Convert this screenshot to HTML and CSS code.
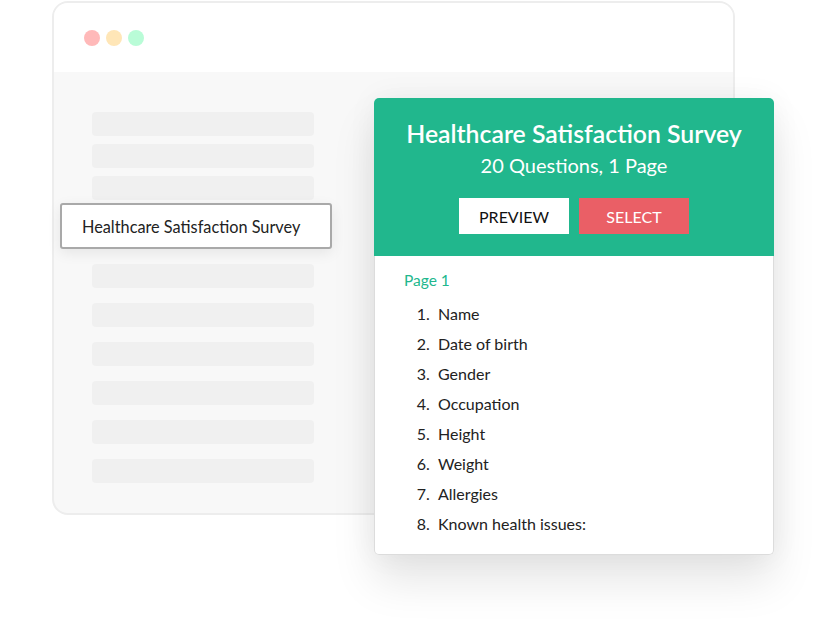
FILE: index.html
```html
<!DOCTYPE html>
<html lang="en">
<head>
    <meta charset="UTF-8">
    <meta name="viewport" content="width=device-width, initial-scale=1.0">
    <title>Survey Templates</title>
    <link rel="stylesheet" href="styles.css">
</head>
<body>
    <div class="stage">
        <!-- Mock browser window with placeholder rows -->
        <div class="window">
            <div class="window-bar">
                <span class="dot red"></span>
                <span class="dot yellow"></span>
                <span class="dot green"></span>
            </div>
            <div class="window-body">
                <div class="rows">
                    <div class="row"></div>
                    <div class="row"></div>
                    <div class="row"></div>
                </div>
                <div class="rows rows-lower">
                    <div class="row"></div>
                    <div class="row"></div>
                    <div class="row"></div>
                    <div class="row"></div>
                    <div class="row"></div>
                    <div class="row"></div>
                </div>
            </div>
        </div>

        <div class="picked">Healthcare Satisfaction Survey</div>

        <!-- Template detail card -->
        <div class="card">
            <div class="card-head">
                <h1>Healthcare Satisfaction Survey</h1>
                <p class="meta">20 Questions, 1 Page</p>
                <div class="actions">
                    <button class="btn btn-preview">PREVIEW</button>
                    <button class="btn btn-select">SELECT</button>
                </div>
            </div>
            <div class="card-body">
                <div class="page-title">Page 1</div>
                <ol class="questions">
                    <li>Name</li>
                    <li>Date of birth</li>
                    <li>Gender</li>
                    <li>Occupation</li>
                    <li>Height</li>
                    <li>Weight</li>
                    <li>Allergies</li>
                    <li>Known health issues:</li>
                </ol>
            </div>
        </div>
    </div>
</body>
</html>
```

FILE: styles.css
```css
/* Basic reset */
* {
    box-sizing: border-box;
    margin: 0;
    padding: 0;
}

body {
    font-family: Lato, "Noto Sans", sans-serif;
    background: #fff;
    color: #222;
}

.stage {
    position: relative;
    width: 834px;
    height: 624px;
    padding: 1px 0 0 52px;
}

/* Browser window */
.window {
    width: 683px;
    height: 514px;
    border: 2px solid #ededed;
    border-radius: 16px;
    overflow: hidden;
    background: #f8f8f8;
}

.window-bar {
    height: 69px;
    background: #fff;
    display: flex;
    align-items: center;
    gap: 6px;
    padding: 1px 0 0 30px;
}

.dot {
    width: 16px;
    height: 16px;
    border-radius: 50%;
}

.dot.red { background: #ffb9b9; }
.dot.yellow { background: #ffe6b7; }
.dot.green { background: #b9fcd7; }

.window-body {
    padding: 40px 0 0 38px;
}

.rows {
    display: flex;
    flex-direction: column;
    gap: 8px;
}

.rows-lower {
    margin-top: 64px;
    gap: 15px;
}

.row {
    width: 222px;
    height: 24px;
    border-radius: 4px;
    background: #f0f0f0;
}

/* Selected template label */
.picked {
    position: absolute;
    left: 60px;
    top: 203px;
    width: 272px;
    height: 46px;
    border: 2px solid #a9a9a9;
    border-radius: 3px;
    background: #fff;
    box-shadow: 0 4px 14px rgba(0, 0, 0, 0.08);
    padding-left: 20px;
    display: flex;
    align-items: center;
    font-size: 16.3px;
    color: #222;
}

/* Template card */
.card {
    position: absolute;
    left: 374px;
    top: 98px;
    width: 400px;
    border-radius: 5px;
    background: #fff;
    box-shadow: 0 26px 44px rgba(0, 0, 0, 0.1), 0 0 30px rgba(0, 0, 0, 0.05);
}

.card-head {
    height: 158px;
    background: #21b78d;
    border-radius: 5px 5px 0 0;
    color: #fff;
    text-align: center;
    padding-top: 20px;
}

.card-head h1 {
    font-size: 24.8px;
    font-weight: 600;
    line-height: 32px;
}

.meta {
    font-size: 20px;
    line-height: 30px;
}

.actions {
    display: flex;
    justify-content: center;
    gap: 10px;
    margin-top: 18px;
}

.btn {
    width: 110px;
    height: 36px;
    border: none;
    font-family: inherit;
    font-size: 16px;
    cursor: pointer;
}

.btn-preview {
    background: #fff;
    color: #111;
}

.btn-select {
    background: #ea5f66;
    color: #fff;
}

.card-body {
    border: 1px solid #dcdcdc;
    border-top: none;
    border-radius: 0 0 5px 5px;
    padding: 14px 0 15px 29px;
}

.page-title {
    color: #21b78d;
    font-size: 15.5px;
    line-height: 20px;
}

.questions {
    margin-top: 9px;
    padding-left: 34px;
    font-size: 16px;
    line-height: 30px;
}

.questions li::marker {
    content: counter(list-item) ".\00a0\00a0";
}
```
